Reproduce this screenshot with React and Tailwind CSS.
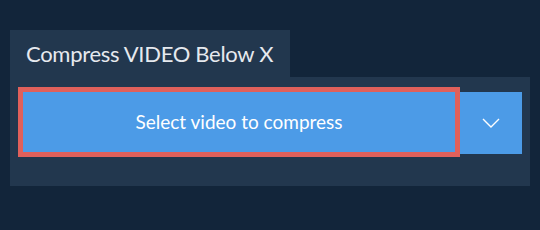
export default function App() {
  return (
    <div
      className="w-[540px] h-[230px] bg-[#12253a] pt-[30px] px-[10px]"
      style={{ fontFamily: 'Lato, "Open Sans", sans-serif' }}
    >
      {/* Tab */}
      <div className="flex">
        <div className="h-[47px] w-[280px] bg-[#22374e] pl-[16px] flex items-center">
          <span className="text-[22px] text-[#e6e9ee] tracking-[-0.3px]">Compress VIDEO Below X</span>
        </div>
      </div>

      {/* Panel */}
      <div className="w-[520px] bg-[#22374e] pl-[13px] pr-[8px] pt-[15px] pb-[32px]">
        <div className="flex items-start gap-[5px]">
          <button className="w-[432px] h-[60px] bg-[#4c9be7] outline-[5px] outline-solid outline-[#e0605b] text-white text-[19px] flex items-center justify-center">
            Select video to compress
          </button>
          <button className="w-[62px] h-[62px] bg-[#4c9be7] flex items-center justify-center text-white">
            <svg width="18" height="10" viewBox="0 0 18 10" fill="none" stroke="currentColor" strokeWidth="1.4">
              <polyline points="1,1 9,9 17,1" />
            </svg>
          </button>
        </div>
      </div>
    </div>
  )
}
